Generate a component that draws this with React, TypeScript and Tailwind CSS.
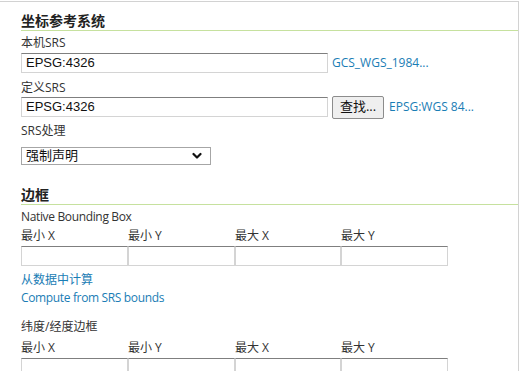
import React from 'react';

const font = "font-['Open_Sans','Noto_Sans_CJK_SC',sans-serif]";

const Chevron = () => (
  <svg viewBox="0 0 10 8" width="10" height="8" fill="none" stroke="#111" strokeWidth="2.2" strokeLinecap="round" strokeLinejoin="round">
    <path d="M1.5 2l3.5 3.5L8.5 2" />
  </svg>
);

const TextBox = ({ value = '', className = '' }: { value?: string; className?: string }) => (
  <div
    className={`h-[20px] border border-[#d4d4d4] border-t-[#7f7f7f] bg-white pl-[4px] flex items-center text-[13px] text-[#111] font-['Liberation_Sans',sans-serif] ${className}`}
  >
    {value}
  </div>
);

const Heading = ({ children }: { children: React.ReactNode }) => (
  <h3 className="h-[19px] leading-[18px] text-[14px] font-bold text-[#222] border-b border-[#c6e19e]">{children}</h3>
);

const Label = ({ children, className = '' }: { children: React.ReactNode; className?: string }) => (
  <div className={`h-[18px] leading-[18px] text-[12px] text-[#333] ${className}`}>{children}</div>
);

const BoundsGrid = () => (
  <>
    <div className="grid grid-cols-[107px_107px_106px_107px]">
      {['最小 X', '最小 Y', '最大 X', '最大 Y'].map(t => (
        <Label key={t}>{t}</Label>
      ))}
    </div>
    <div className="mt-[1px] grid grid-cols-[107px_107px_106px_107px]">
      {[0, 1, 2, 3].map(i => (
        <TextBox key={i} />
      ))}
    </div>
  </>
);

export default function App() {
  return (
    <div className={`bg-white w-[523px] h-[371px] overflow-hidden ${font}`}>
      <div className="mt-[1px] w-[519px] h-[400px] border-t border-r border-[#d2d2d2] pl-[21px] pt-[10px]">
        <Heading>坐标参考系统</Heading>

        <Label className="mt-[3px]">本机SRS</Label>
        <div className="mt-[1px] flex items-center h-[20px]">
          <TextBox value="EPSG:4326" className="w-[307px]" />
          <a className="ml-[4px] text-[12px] text-[#1a7db5]">GCS_WGS_1984...</a>
        </div>

        <Label className="mt-[6px]">定义SRS</Label>
        <div className="flex items-center h-[20px]">
          <TextBox value="EPSG:4326" className="w-[307px]" />
          <button className="ml-[4px] h-[23px] w-[52px] rounded-[2px] border border-[#8c8c8c] bg-[#efefef] text-[13px] text-[#111] flex items-center justify-center">
            查找...
          </button>
          <a className="ml-[5px] text-[12px] text-[#1a7db5]">EPSG:WGS 84...</a>
        </div>

        <Label className="mt-[5px]">SRS处理</Label>
        <div className="mt-[7px] w-[190px] h-[18px] border border-[#a6a6a6] flex items-center justify-between pl-[4px] pr-[8px] text-[13px] text-[#111]">
          <span>强制声明</span>
          <Chevron />
        </div>

        <div className="mt-[21px]">
          <Heading>边框</Heading>
        </div>

        <Label className="mt-[3px] tracking-[-0.35px]">Native Bounding Box</Label>
        <div className="mt-[1px]">
          <BoundsGrid />
        </div>

        <div className="mt-[5px] flex flex-col text-[12px] text-[#1a7db5]">
          <a className="h-[18px] leading-[18px]">从数据中计算</a>
          <a className="h-[18px] leading-[18px] tracking-[-0.35px]">Compute from SRS bounds</a>
        </div>

        <Label className="mt-[11px]">纬度/经度边框</Label>
        <div className="mt-[3px]">
          <BoundsGrid />
        </div>
      </div>
    </div>
  );
}
